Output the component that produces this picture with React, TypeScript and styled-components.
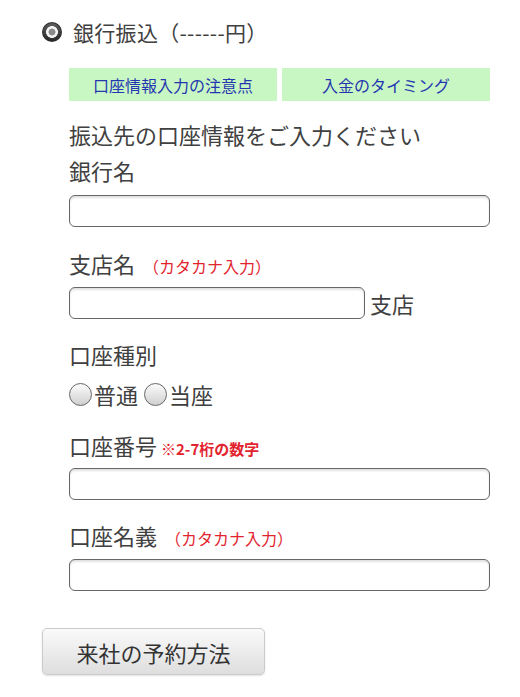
import React from "react";
import styled, { createGlobalStyle } from "styled-components";

const Global = createGlobalStyle`
  html, body { margin: 0; padding: 0; background: #fff; }
  body {
    font-family: "Noto Sans CJK JP", "Noto Sans", "Liberation Sans", sans-serif;
    color: #404040;
  }
  * { box-sizing: border-box; }
`;

const Page = styled.div`
  width: 520px;
  height: 697px;
  padding-top: 20px;
  overflow: hidden;
`;

const PayRow = styled.label`
  display: flex;
  align-items: center;
  gap: 11px;
  height: 24px;
  padding-left: 42px;
  font-size: 21px;
  line-height: 24px;
  letter-spacing: 0.3px;
`;

const CheckedRadio = styled.span`
  width: 20px;
  height: 20px;
  border-radius: 50%;
  flex: none;
  background:
    radial-gradient(circle at 50% 50%, #8a8a8a 0 3.2px, #f4f4f4 3.8px 5.6px, transparent 6.2px),
    linear-gradient(#606060, #262626);
  box-shadow: inset 0 0 0 1px #2a2a2a;
`;

const Section = styled.div`
  padding-left: 69px;
  width: 490px;
`;

const TabRow = styled.div`
  display: grid;
  grid-template-columns: 208px 208px;
  gap: 5px;
  margin-top: 24px;
`;

const Tab = styled.a`
  display: flex;
  align-items: center;
  justify-content: center;
  height: 33px;
  background: #c9f7c4;
  color: #2537b0;
  font-size: 16px;
  text-decoration: none;
`;

const Intro = styled.div`
  margin-top: 18px;
  font-size: 22px;
  line-height: 30px;
`;

const Field = styled.div<{ $gap: number }>`
  margin-top: ${(p) => p.$gap}px;
  display: flex;
  flex-direction: column;
`;

const Label = styled.div`
  display: flex;
  align-items: baseline;
  font-size: 22px;
  line-height: 30px;
  height: 30px;
`;

const Note = styled.span<{ $small?: boolean }>`
  color: #e2232e;
  font-size: ${(p) => (p.$small ? 15 : 16)}px;
  font-weight: ${(p) => (p.$small ? 700 : 400)};
  margin-left: ${(p) => (p.$small ? 4 : 8)}px;
`;

const InputRow = styled.div<{ $gap: number }>`
  display: flex;
  align-items: center;
  margin-top: ${(p) => p.$gap}px;
`;

const TextInput = styled.input<{ $w: number }>`
  width: ${(p) => p.$w}px;
  height: 32px;
  border: 1.5px solid #666;
  border-radius: 6px;
  background: #fff;
  box-shadow: inset 0 2px 2px rgba(0, 0, 0, 0.12);
  outline: none;
  padding: 0 8px;
  font-size: 18px;
`;

const Suffix = styled.span`
  font-size: 22px;
  margin-left: 5px;
`;

const RadioRow = styled.div`
  display: flex;
  align-items: center;
  height: 30px;
  margin-top: 10px;
  font-size: 22px;
`;

const RadioOption = styled.label`
  display: flex;
  align-items: center;
  margin-right: 6px;
`;

const EmptyRadio = styled.span`
  width: 23px;
  height: 23px;
  border-radius: 50%;
  border: 1px solid #666;
  background: linear-gradient(#fbfbfb, #d0d0d0);
  margin-right: 2px;
  flex: none;
`;

const ReserveButton = styled.button`
  display: block;
  margin: 37px 0 0 42px;
  width: 223px;
  height: 47px;
  border: 1px solid #cbcbcb;
  border-radius: 5px;
  background: linear-gradient(#fafafa, #dedede);
  box-shadow: 0 1px 2px rgba(0, 0, 0, 0.12);
  color: #333;
  font-family: inherit;
  font-size: 22px;
  padding: 0;
`;

export default function App() {
  return (
    <>
      <Global />
      <Page>
        <PayRow>
          <CheckedRadio />
          銀行振込（------円）
        </PayRow>
        <Section>
          <TabRow>
            <Tab>口座情報入力の注意点</Tab>
            <Tab>入金のタイミング</Tab>
          </TabRow>
          <Intro>振込先の口座情報をご入力ください</Intro>
          <Field $gap={6}>
            <Label>銀行名</Label>
            <InputRow $gap={10}>
              <TextInput $w={421} />
            </InputRow>
          </Field>
          <Field $gap={21}>
            <Label>
              支店名<Note>（カタカナ入力）</Note>
            </Label>
            <InputRow $gap={9}>
              <TextInput $w={296} />
              <Suffix>支店</Suffix>
            </InputRow>
          </Field>
          <Field $gap={20}>
            <Label>口座種別</Label>
            <RadioRow>
              <RadioOption>
                <EmptyRadio />
                普通
              </RadioOption>
              <RadioOption>
                <EmptyRadio />
                当座
              </RadioOption>
            </RadioRow>
          </Field>
          <Field $gap={21}>
            <Label>
              口座番号<Note $small>※2-7桁の数字</Note>
            </Label>
            <InputRow $gap={8}>
              <TextInput $w={421} />
            </InputRow>
          </Field>
          <Field $gap={20}>
            <Label>
              口座名義<Note>（カタカナ入力）</Note>
            </Label>
            <InputRow $gap={9}>
              <TextInput $w={421} />
            </InputRow>
          </Field>
        </Section>
        <ReserveButton>来社の予約方法</ReserveButton>
      </Page>
    </>
  );
}
